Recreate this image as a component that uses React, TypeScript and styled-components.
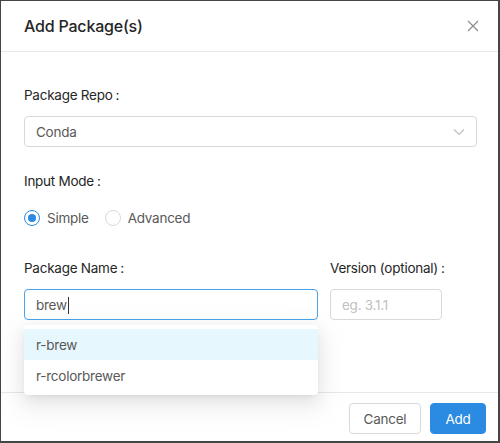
import React from "react";
import styled, { createGlobalStyle } from "styled-components";

const Global = createGlobalStyle`
  html, body { margin: 0; padding: 0; }
  body {
    background: #454545;
    font-family: Inter, "Liberation Sans", Arial, sans-serif;
    -webkit-font-smoothing: antialiased;
    letter-spacing: -0.25px;
  }
  * { box-sizing: border-box; }
`;

const Modal = styled.div`
  margin: 1px;
  width: 497px;
  height: 440px;
  background: #fff;
  display: flex;
  flex-direction: column;
`;

const Header = styled.div`
  height: 51px;
  padding: 0 19px 0 23px;
  display: flex;
  align-items: center;
  justify-content: space-between;
  border-bottom: 1px solid #e8e8e8;
`;

const Title = styled.div`
  font-size: 16px;
  font-weight: 500;
  color: #262626;
  line-height: 22px;
  letter-spacing: -0.2px;
`;

const Close = styled.button`
  border: 0;
  background: transparent;
  padding: 0;
  width: 12px;
  height: 12px;
  display: flex;
  color: #8c8c8c;
`;

const Body = styled.div`
  flex: 1;
  padding: 32px 21px 0 23px;
  display: flex;
  flex-direction: column;
  gap: 23px;
`;

const Item = styled.div`
  display: flex;
  flex-direction: column;
`;

const Row = styled.div`
  display: flex;
  gap: 12px;
`;

const Label = styled.div`
  font-size: 13.5px;
  line-height: 22px;
  color: #262626;
  margin-bottom: 10px;
  white-space: nowrap;
  &::after {
    content: ":";
    margin-left: 3px;
  }
`;

const SelectBox = styled.div`
  height: 31px;
  border: 1px solid #d9d9d9;
  border-radius: 4px;
  display: flex;
  align-items: center;
  justify-content: space-between;
  padding: 0 11px 0 11px;
  font-size: 13.5px;
  color: #595959;
`;

const RadioGroup = styled.div`
  height: 32px;
  display: flex;
  align-items: center;
`;

const RadioLabel = styled.label`
  display: flex;
  align-items: center;
  font-size: 13.5px;
  color: #595959;
  margin-right: 8px;
`;

const RadioCircle = styled.span<{ $checked?: boolean }>`
  width: 16px;
  height: 16px;
  border-radius: 50%;
  border: 1px solid ${(p) => (p.$checked ? "#2b8ae2" : "#d9d9d9")};
  display: flex;
  align-items: center;
  justify-content: center;
  &::after {
    content: "";
    width: 8px;
    height: 8px;
    border-radius: 50%;
    background: #2b8ae2;
    display: ${(p) => (p.$checked ? "block" : "none")};
  }
`;

const RadioText = styled.span`
  padding: 0 8px 0 7px;
`;

const Field = styled.div<{ $w: number }>`
  width: ${(p) => p.$w}px;
  display: flex;
  flex-direction: column;
`;

const Anchor = styled.div`
  position: relative;
`;

const Input = styled.div<{ $focus?: boolean }>`
  height: 31px;
  border: 1px solid ${(p) => (p.$focus ? "#4aa3eb" : "#d9d9d9")};
  border-radius: 4px;
  display: flex;
  align-items: center;
  padding: 1px 11px 0;
  font-size: 13.5px;
  color: #595959;
`;

const Placeholder = styled.span`
  color: #bfbfbf;
`;

const Caret = styled.span`
  display: inline-block;
  width: 1px;
  height: 17px;
  background: #333;
  margin-left: 1px;
`;

const Dropdown = styled.div`
  position: absolute;
  top: 36px;
  left: 0;
  right: 0;
  background: #fff;
  border-radius: 4px;
  padding: 4px 0;
  box-shadow: 0 3px 6px -4px rgba(0, 0, 0, 0.12), 0 6px 16px 0 rgba(0, 0, 0, 0.08),
    0 9px 28px 8px rgba(0, 0, 0, 0.05);
  z-index: 2;
`;

const Option = styled.div<{ $active?: boolean }>`
  height: 31px;
  line-height: 32px;
  padding: 0 12px;
  font-size: 13.5px;
  color: #595959;
  background: ${(p) => (p.$active ? "#e6f7fd" : "#fff")};
`;

const Footer = styled.div`
  border-top: 1px solid #e8e8e8;
  padding: 10px 12px 7px;
  display: flex;
  justify-content: flex-end;
  gap: 9px;
`;

const Button = styled.button<{ $primary?: boolean; $w: number }>`
  width: ${(p) => p.$w}px;
  height: 31px;
  border-radius: 4px;
  font-family: inherit;
  letter-spacing: inherit;
  font-size: 13.5px;
  border: 1px solid ${(p) => (p.$primary ? "#2b8ae2" : "#d9d9d9")};
  background: ${(p) => (p.$primary ? "#2b8ae2" : "#fff")};
  color: ${(p) => (p.$primary ? "#fff" : "#595959")};
  padding: 0;
`;

export default function App() {
  return (
    <>
      <Global />
      <Modal>
        <Header>
          <Title>Add Package(s)</Title>
          <Close aria-label="close">
            <svg width="12" height="12" viewBox="0 0 12 12">
              <path d="M1 1L11 11M11 1L1 11" stroke="currentColor" strokeWidth="1.2" />
            </svg>
          </Close>
        </Header>
        <Body>
          <Item>
            <Label>Package Repo</Label>
            <SelectBox>
              <span>Conda</span>
              <svg width="12" height="8" viewBox="0 0 12 8">
                <path d="M1 1.5L6 6.5L11 1.5" fill="none" stroke="#bfbfbf" strokeWidth="1.2" />
              </svg>
            </SelectBox>
          </Item>
          <Item>
            <Label>Input Mode</Label>
            <RadioGroup>
              <RadioLabel>
                <RadioCircle $checked />
                <RadioText>Simple</RadioText>
              </RadioLabel>
              <RadioLabel>
                <RadioCircle />
                <RadioText>Advanced</RadioText>
              </RadioLabel>
            </RadioGroup>
          </Item>
          <Row>
            <Field $w={294}>
              <Label>Package Name</Label>
              <Anchor>
                <Input $focus>
                  brew
                  <Caret />
                </Input>
                <Dropdown>
                  <Option $active>r-brew</Option>
                  <Option>r-rcolorbrewer</Option>
                </Dropdown>
              </Anchor>
            </Field>
            <Field $w={112}>
              <Label>Version (optional)</Label>
              <Input>
                <Placeholder>eg. 3.1.1</Placeholder>
              </Input>
            </Field>
          </Row>
        </Body>
        <Footer>
          <Button $w={72}>Cancel</Button>
          <Button $w={56} $primary>
            Add
          </Button>
        </Footer>
      </Modal>
    </>
  );
}
